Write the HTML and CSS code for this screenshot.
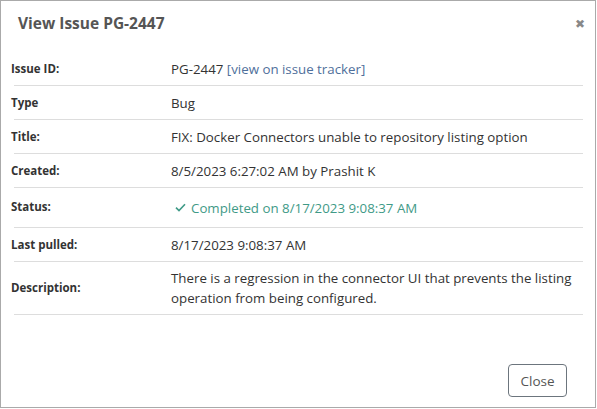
FILE: index.html
```html
<!DOCTYPE html>
<html>
<head>
<meta charset="utf-8">
<link rel="stylesheet" href="styles.css">
</head>
<body>
<div class="dialog">
  <div class="header">
    <h1 class="title">View Issue PG-2447</h1>
    <span class="close-x">&#x2716;</span>
  </div>
  <div class="details">
    <div class="row"><div class="label">Issue ID:</div><div class="value">PG-2447 <a class="link">[view on issue tracker]</a></div></div>
    <div class="row"><div class="label">Type</div><div class="value">Bug</div></div>
    <div class="row"><div class="label">Title:</div><div class="value">FIX: Docker Connectors unable to repository listing option</div></div>
    <div class="row"><div class="label">Created:</div><div class="value">8/5/2023 6:27:02 AM by Prashit K</div></div>
    <div class="row row-status"><div class="label">Status:</div><div class="value"><span class="status"><svg class="check" width="11" height="9" viewBox="0 0 11 9"><path d="M1 4.6 L4 7.6 L10 1.2" fill="none" stroke="currentColor" stroke-width="1.6"/></svg>Completed on 8/17/2023 9:08:37 AM</span></div></div>
    <div class="row"><div class="label">Last pulled:</div><div class="value">8/17/2023 9:08:37 AM</div></div>
    <div class="row row-desc"><div class="label">Description:</div><div class="value desc">There is a regression in the connector UI that prevents the listing operation from being configured.</div></div>
  </div>
  <div class="footer">
    <button class="btn">Close</button>
  </div>
</div>
</body>
</html>
```
FILE: styles.css
```css
html, body {
  margin: 0;
  padding: 0;
  background: #fff;
}
body {
  font-family: "Open Sans", "Noto Sans", sans-serif;
  color: #333;
}
.dialog {
  width: 596px;
  height: 408px;
  box-sizing: border-box;
  border: 1px solid #aaa;
  display: flex;
  flex-direction: column;
}
.header {
  height: 51px;
  display: flex;
  justify-content: space-between;
  align-items: flex-start;
  padding: 12px 10px 0 17px;
  box-sizing: border-box;
}
.title {
  margin: 0;
  font-size: 15.5px;
  font-weight: 700;
  color: #555;
  line-height: 20px;
}
.close-x {
  font-size: 12px;
  color: #888;
  line-height: 20px;
  padding-top: 1px;
}
.details {
  margin: 0 12px 0 13px;
}
.row {
  display: flex;
  align-items: center;
  border-bottom: 1px solid #ddd;
  padding: 7px 0 6px;
  line-height: 20px;
}
.row-status {
  padding: 9px 0 9px;
}
.row-desc {
  padding: 6px 0 6px;
}
.label {
  width: 160px;
  flex-shrink: 0;
  margin-left: -3px;
  font-size: 11.5px;
  font-weight: 700;
  color: #333;
}
.value {
  font-size: 13.3px;
  color: #333;
  flex: 1;
}
.desc {
  padding-right: 4px;
}
.link {
  color: #4f6f9b;
  text-decoration: none;
}
.status {
  color: #3f9a87;
  padding-left: 4px;
  display: inline-flex;
  align-items: center;
}
.check {
  margin-right: 5px;
  color: #3f9a87;
}
.footer {
  margin-top: auto;
  display: flex;
  justify-content: flex-end;
  padding: 0 28px 10px 0;
}
.btn {
  font-family: "Open Sans", "Noto Sans", sans-serif;
  font-size: 13.5px;
  color: #555;
  background: #fff;
  border: 1px solid #6c757d;
  border-radius: 4px;
  width: 59px;
  height: 33px;
  padding: 0;
}
```
